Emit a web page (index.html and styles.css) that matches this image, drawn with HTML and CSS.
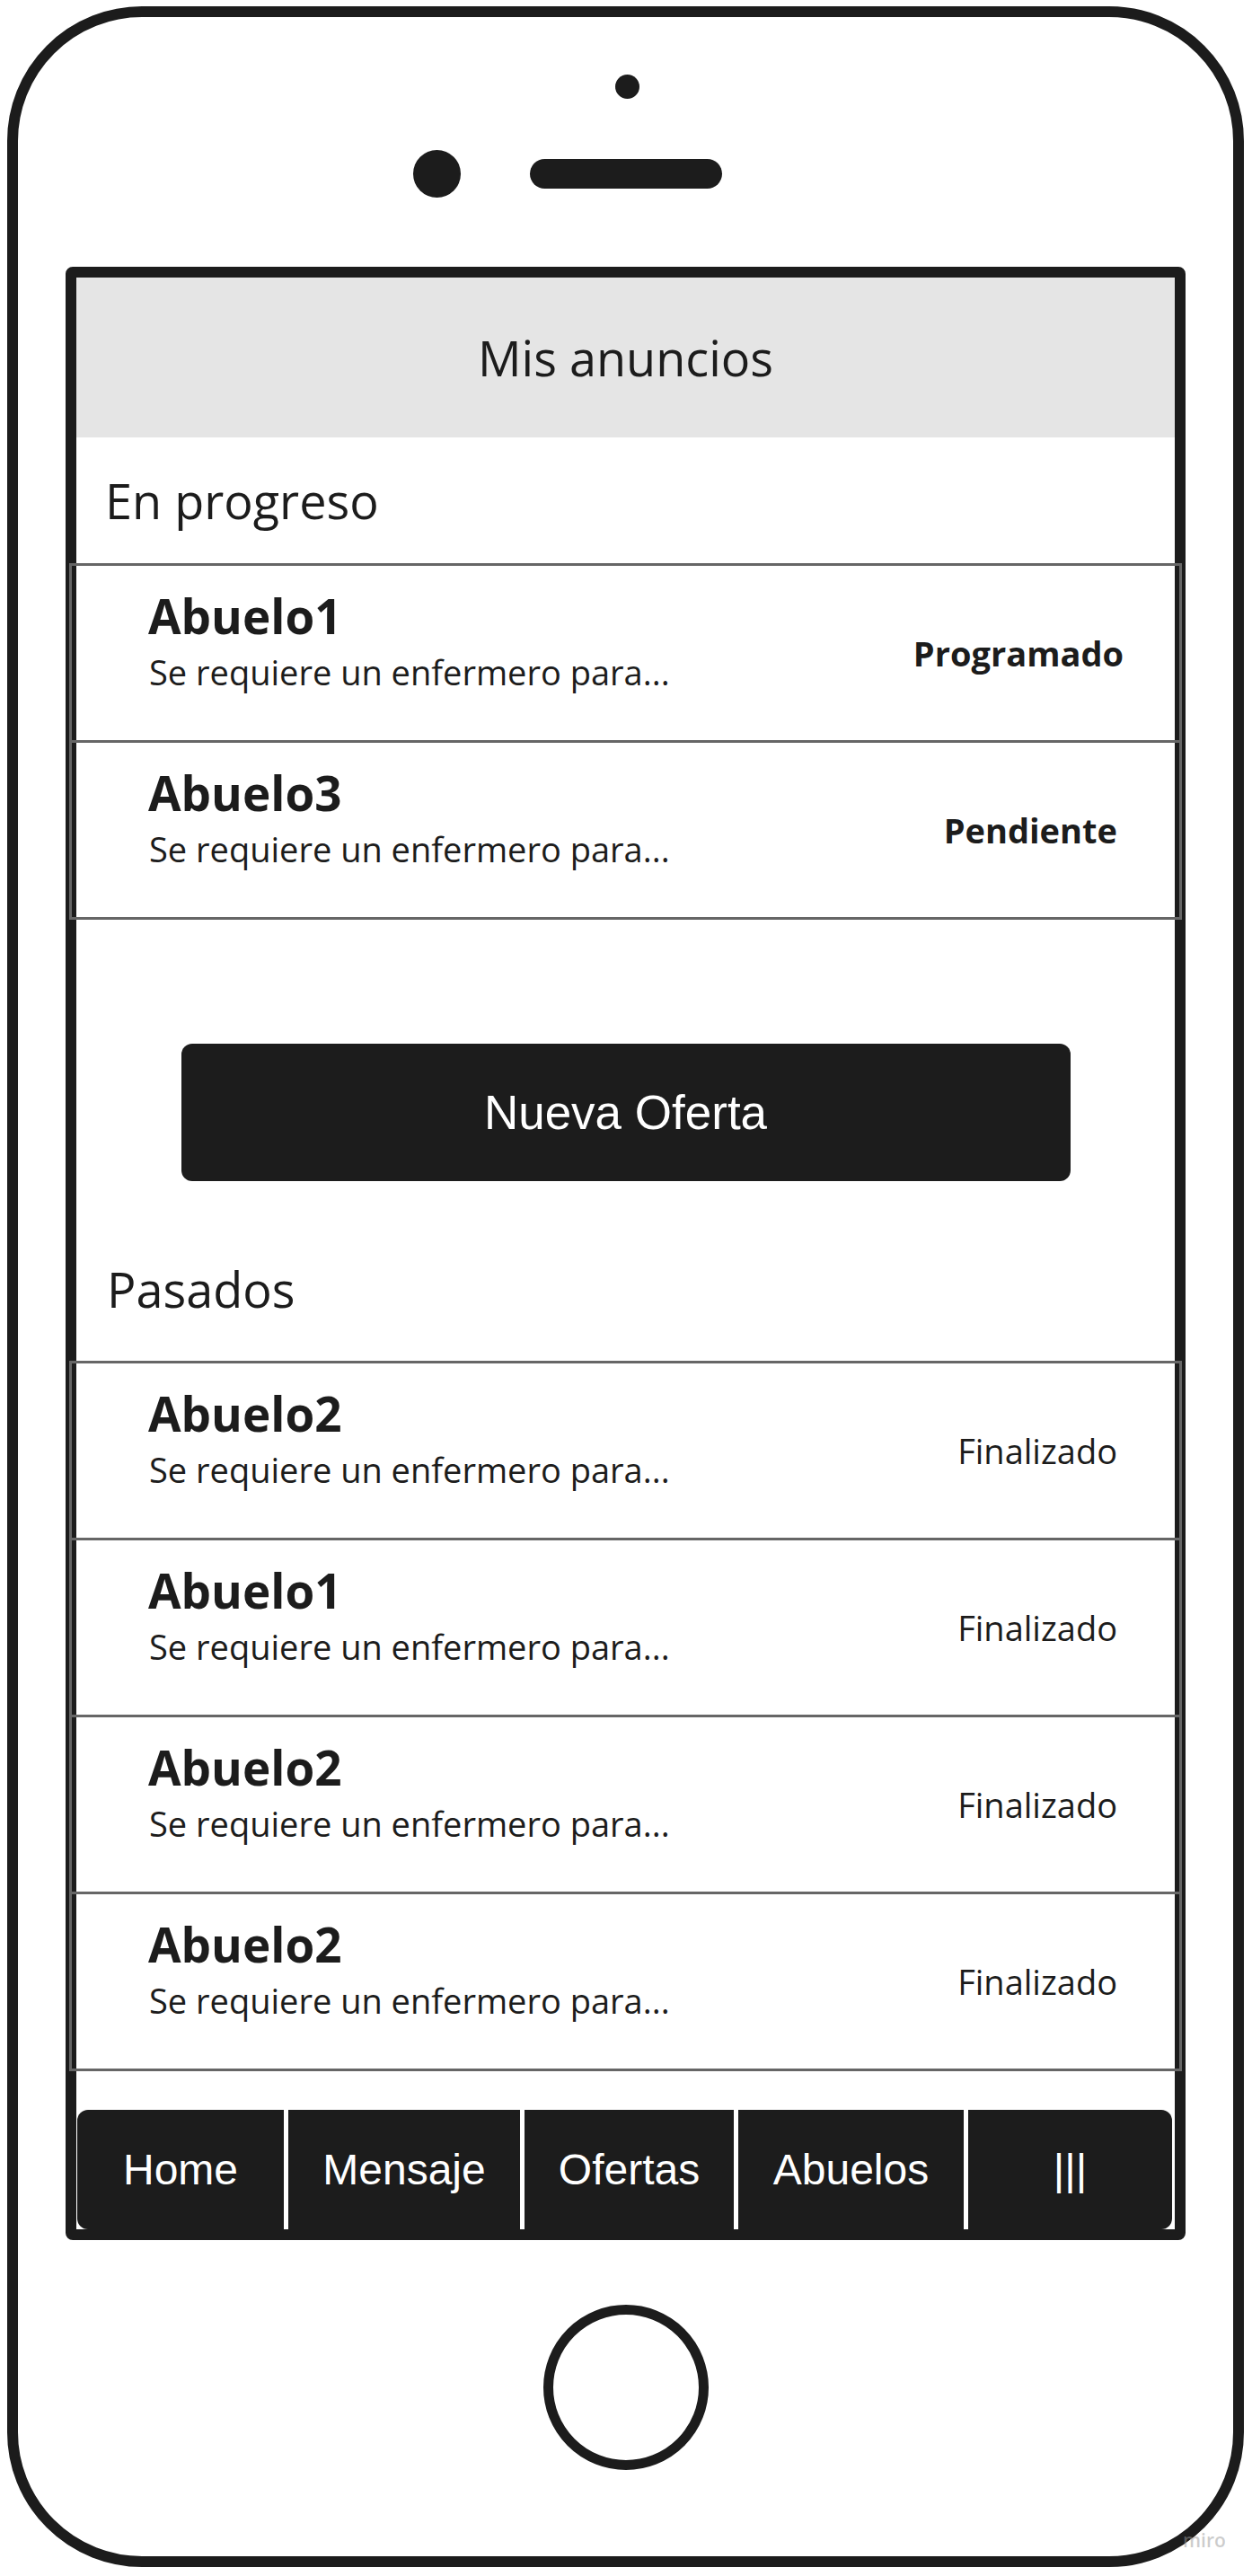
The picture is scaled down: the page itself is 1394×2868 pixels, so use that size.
FILE: index.html
```html
<!DOCTYPE html>
<html lang="es">
<head>
<meta charset="utf-8">
<title>Mis anuncios</title>
<link rel="stylesheet" href="styles.css">
</head>
<body>
<div class="phone">
  <div class="sensor-dot"></div>
  <div class="sensor-row">
    <div class="camera"></div>
    <div class="speaker"></div>
    <div class="sensor-spacer"></div>
  </div>
  <div class="screen">
    <div class="app-header">Mis anuncios</div>
    <div class="section-title">En progreso</div>
    <div class="list">
      <div class="row">
        <div class="row-text">
          <div class="row-title">Abuelo1</div>
          <div class="row-desc">Se requiere un enfermero para...</div>
        </div>
        <div class="row-status strong wide">Programado</div>
      </div>
      <div class="row">
        <div class="row-text">
          <div class="row-title">Abuelo3</div>
          <div class="row-desc">Se requiere un enfermero para...</div>
        </div>
        <div class="row-status strong">Pendiente</div>
      </div>
    </div>
    <div class="btn-wrap">
      <div class="btn">Nueva Oferta</div>
    </div>
    <div class="section-title past">Pasados</div>
    <div class="list">
      <div class="row">
        <div class="row-text">
          <div class="row-title">Abuelo2</div>
          <div class="row-desc">Se requiere un enfermero para...</div>
        </div>
        <div class="row-status">Finalizado</div>
      </div>
      <div class="row">
        <div class="row-text">
          <div class="row-title">Abuelo1</div>
          <div class="row-desc">Se requiere un enfermero para...</div>
        </div>
        <div class="row-status">Finalizado</div>
      </div>
      <div class="row">
        <div class="row-text">
          <div class="row-title">Abuelo2</div>
          <div class="row-desc">Se requiere un enfermero para...</div>
        </div>
        <div class="row-status">Finalizado</div>
      </div>
      <div class="row">
        <div class="row-text">
          <div class="row-title">Abuelo2</div>
          <div class="row-desc">Se requiere un enfermero para...</div>
        </div>
        <div class="row-status">Finalizado</div>
      </div>
    </div>
    <div class="nav">
      <div class="nav-item w1">Home</div>
      <div class="nav-item w2">Mensaje</div>
      <div class="nav-item w3">Ofertas</div>
      <div class="nav-item w4">Abuelos</div>
      <div class="nav-item w5">|||</div>
    </div>
  </div>
  <div class="home-button"></div>
</div>
<div class="watermark">miro</div>
</body>
</html>
```

FILE: styles.css
```css
html, body {
  margin: 0;
  padding: 0;
  background: #ffffff;
}

body {
  width: 1394px;
  height: 2868px;
  position: relative;
  overflow: hidden;
  font-family: "Open Sans", "Liberation Sans", sans-serif;
  color: #1c1c1c;
}

.phone {
  box-sizing: border-box;
  width: 1377px;
  height: 2851px;
  margin: 7px 0 0 8px;
  border: 12px solid #1c1c1c;
  border-radius: 150px;
  display: flex;
  flex-direction: column;
  align-items: center;
  padding-top: 64px;
}

.sensor-dot {
  width: 27px;
  height: 27px;
  border-radius: 50%;
  background: #1c1c1c;
  margin-left: 3px;
  flex: none;
}

.sensor-row {
  display: flex;
  align-items: center;
  gap: 77px;
  height: 53px;
  margin-top: 57px;
  flex: none;
}

.camera {
  width: 53px;
  height: 53px;
  border-radius: 50%;
  background: #1c1c1c;
}

.speaker {
  width: 214px;
  height: 33px;
  border-radius: 17px;
  background: #1c1c1c;
}

.sensor-spacer {
  width: 53px;
  height: 53px;
}

.screen {
  box-sizing: border-box;
  width: 1247px;
  height: 2197px;
  margin-top: 77px;
  border: 12px solid #1c1c1c;
  border-radius: 8px;
  background: #ffffff;
  display: flex;
  flex-direction: column;
  flex: none;
}

.app-header {
  height: 178px;
  flex: none;
  background: #e5e5e5;
  display: flex;
  align-items: center;
  justify-content: center;
  font-size: 54px;
  font-weight: 400;
}

.section-title {
  height: 140px;
  flex: none;
  display: flex;
  align-items: center;
  padding-left: 32px;
  font-size: 54px;
  font-weight: 400;
}

.section-title.past {
  height: 160px;
  margin-top: 40px;
  padding-left: 34px;
}

.list {
  display: flex;
  flex-direction: column;
  flex: none;
}

.row {
  box-sizing: border-box;
  height: 200px;
  margin: 0 -8px;
  border: 3px solid #666666;
  display: flex;
  align-items: center;
  justify-content: space-between;
  padding: 0 69px 0 85px;
}

.row + .row {
  margin-top: -3px;
}

.row-text {
  align-self: flex-start;
  padding-top: 25px;
}

.row-title {
  font-size: 53px;
  line-height: 62px;
  font-weight: 700;
}

.row-desc {
  font-size: 38px;
  line-height: 62px;
  font-weight: 400;
  padding-left: 1px;
}

.row-status {
  font-size: 38px;
  font-weight: 400;
}

.row-status.strong {
  font-weight: 700;
}

.row-status.wide {
  margin-right: -7px;
}

.btn-wrap {
  margin-top: 138px;
  display: flex;
  justify-content: center;
  flex: none;
}

.btn {
  width: 990px;
  height: 153px;
  border-radius: 12px;
  background: #1c1c1c;
  color: #ffffff;
  display: flex;
  align-items: center;
  justify-content: center;
  font-family: "Liberation Sans", Arial, sans-serif;
  font-size: 53px;
}

.nav {
  margin: 43px 3px 0 1px;
  height: 133px;
  display: flex;
  gap: 5px;
  flex: none;
}

.nav-item {
  background: #1c1c1c;
  color: #ffffff;
  display: flex;
  align-items: center;
  justify-content: center;
  font-family: "Liberation Sans", Arial, sans-serif;
  font-size: 48px;
  flex: none;
}

.w1 { width: 230px; border-radius: 12px 0 0 12px; }
.w2 { width: 258px; }
.w3 { width: 233px; }
.w4 { width: 251px; }
.w5 { width: 227px; border-radius: 0 12px 12px 0; }

.home-button {
  box-sizing: border-box;
  width: 184px;
  height: 184px;
  margin-top: 72px;
  border: 11px solid #1c1c1c;
  border-radius: 50%;
  flex: none;
}

.watermark {
  position: absolute;
  left: 1317px;
  top: 2814px;
  font-family: "Open Sans", sans-serif;
  font-size: 21px;
  font-weight: 600;
  color: rgba(153, 153, 153, 0.5);
}
```
